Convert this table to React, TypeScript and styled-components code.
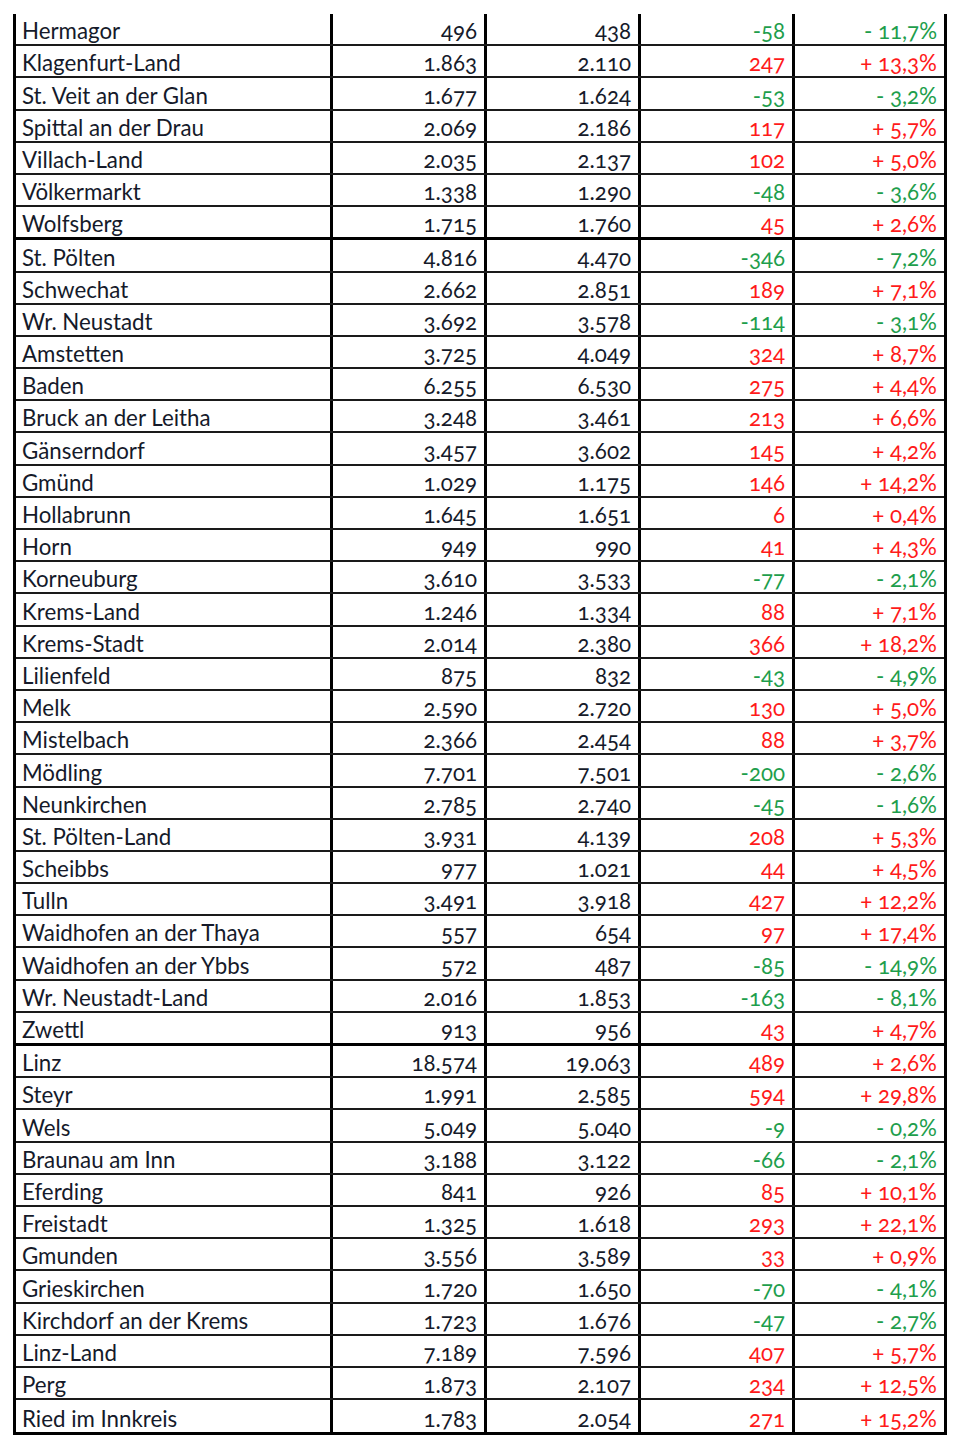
import React from "react";
import styled, { createGlobalStyle } from "styled-components";

const Global = createGlobalStyle`
  html, body { margin: 0; padding: 0; background: #ffffff; }
  body { font-family: Lato, "Open Sans", sans-serif; }
`;

type Row = [string, string, string, string, string, boolean?];

const data: Row[] = [
  ["Hermagor", "496", "438", "-58", "- 11,7%"],
  ["Klagenfurt-Land", "1.863", "2.110", "247", "+ 13,3%"],
  ["St. Veit an der Glan", "1.677", "1.624", "-53", "- 3,2%"],
  ["Spittal an der Drau", "2.069", "2.186", "117", "+ 5,7%"],
  ["Villach-Land", "2.035", "2.137", "102", "+ 5,0%"],
  ["Völkermarkt", "1.338", "1.290", "-48", "- 3,6%"],
  ["Wolfsberg", "1.715", "1.760", "45", "+ 2,6%", true],
  ["St. Pölten", "4.816", "4.470", "-346", "- 7,2%"],
  ["Schwechat", "2.662", "2.851", "189", "+ 7,1%"],
  ["Wr. Neustadt", "3.692", "3.578", "-114", "- 3,1%"],
  ["Amstetten", "3.725", "4.049", "324", "+ 8,7%"],
  ["Baden", "6.255", "6.530", "275", "+ 4,4%"],
  ["Bruck an der Leitha", "3.248", "3.461", "213", "+ 6,6%"],
  ["Gänserndorf", "3.457", "3.602", "145", "+ 4,2%"],
  ["Gmünd", "1.029", "1.175", "146", "+ 14,2%"],
  ["Hollabrunn", "1.645", "1.651", "6", "+ 0,4%"],
  ["Horn", "949", "990", "41", "+ 4,3%"],
  ["Korneuburg", "3.610", "3.533", "-77", "- 2,1%"],
  ["Krems-Land", "1.246", "1.334", "88", "+ 7,1%"],
  ["Krems-Stadt", "2.014", "2.380", "366", "+ 18,2%"],
  ["Lilienfeld", "875", "832", "-43", "- 4,9%"],
  ["Melk", "2.590", "2.720", "130", "+ 5,0%"],
  ["Mistelbach", "2.366", "2.454", "88", "+ 3,7%"],
  ["Mödling", "7.701", "7.501", "-200", "- 2,6%"],
  ["Neunkirchen", "2.785", "2.740", "-45", "- 1,6%"],
  ["St. Pölten-Land", "3.931", "4.139", "208", "+ 5,3%"],
  ["Scheibbs", "977", "1.021", "44", "+ 4,5%"],
  ["Tulln", "3.491", "3.918", "427", "+ 12,2%"],
  ["Waidhofen an der Thaya", "557", "654", "97", "+ 17,4%"],
  ["Waidhofen an der Ybbs", "572", "487", "-85", "- 14,9%"],
  ["Wr. Neustadt-Land", "2.016", "1.853", "-163", "- 8,1%"],
  ["Zwettl", "913", "956", "43", "+ 4,7%", true],
  ["Linz", "18.574", "19.063", "489", "+ 2,6%"],
  ["Steyr", "1.991", "2.585", "594", "+ 29,8%"],
  ["Wels", "5.049", "5.040", "-9", "- 0,2%"],
  ["Braunau am Inn", "3.188", "3.122", "-66", "- 2,1%"],
  ["Eferding", "841", "926", "85", "+ 10,1%"],
  ["Freistadt", "1.325", "1.618", "293", "+ 22,1%"],
  ["Gmunden", "3.556", "3.589", "33", "+ 0,9%"],
  ["Grieskirchen", "1.720", "1.650", "-70", "- 4,1%"],
  ["Kirchdorf an der Krems", "1.723", "1.676", "-47", "- 2,7%"],
  ["Linz-Land", "7.189", "7.596", "407", "+ 5,7%"],
  ["Perg", "1.873", "2.107", "234", "+ 12,5%"],
  ["Ried im Innkreis", "1.783", "2.054", "271", "+ 15,2%"],
];

const Page = styled.div`
  padding: 14px 13px 10px 13px;
`;

const Sheet = styled.div`
  width: 934px;
  box-sizing: border-box;
  border-left: 3px solid #000;
  border-right: 3px solid #000;
  border-bottom: 3px solid #000;
`;

const RowEl = styled.div<{ $sep: "thin" | "thick" | "none" }>`
  display: grid;
  grid-template-columns: 314px 151px 151px 151px 149px;
  column-gap: 3px;
  background: #000;
  box-sizing: border-box;
  height: ${(p) => (p.$sep === "thick" ? "33.2px" : "32.2px")};
  border-bottom: ${(p) =>
    p.$sep === "thick" ? "3px solid #000" : p.$sep === "thin" ? "2px solid #1a1a1a" : "none"};
`;

const Cell = styled.div<{ $align: "left" | "right"; $tone?: "green" | "red" | "dark" }>`
  background: #fff;
  display: flex;
  align-items: flex-end;
  justify-content: ${(p) => (p.$align === "left" ? "flex-start" : "flex-end")};
  padding: ${(p) => (p.$align === "left" ? "0 0 0 6px" : "0 7px 0 0")};
  box-sizing: border-box;
  font-size: 22.3px;
  line-height: 27px;
  font-variant-numeric: oldstyle-nums;
  font-feature-settings: "onum" 1;
  white-space: nowrap;
  color: ${(p) => (p.$tone === "green" ? "#1e9e4c" : p.$tone === "red" ? "#ff1a1a" : "#151a2a")};
`;

export default function App() {
  return (
    <>
      <Global />
      <Page>
        <Sheet>
          {data.map(([name, a, b, diff, pct, thick], i) => {
            const tone = diff.startsWith("-") ? "green" : "red";
            const sep = i === data.length - 1 ? "none" : thick ? "thick" : "thin";
            return (
              <RowEl key={name} $sep={sep}>
                <Cell $align="left">{name}</Cell>
                <Cell $align="right">{a}</Cell>
                <Cell $align="right">{b}</Cell>
                <Cell $align="right" $tone={tone}>{diff}</Cell>
                <Cell $align="right" $tone={tone}>{pct}</Cell>
              </RowEl>
            );
          })}
        </Sheet>
      </Page>
    </>
  );
}
